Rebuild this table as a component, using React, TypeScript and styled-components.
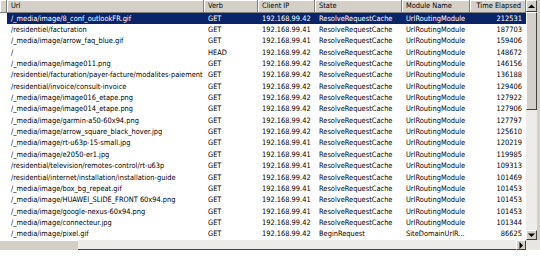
import React from "react";
import styled, { createGlobalStyle } from "styled-components";

const Global = createGlobalStyle`
  html, body { margin: 0; padding: 0; background: #ffffff; }
  body { width: 540px; height: 256px; overflow: hidden; }
`;

const COLS = "7px 197px 54px 57px 87px 68px 56px";
const ROW_H = 11.35;

const Frame = styled.div`
  width: 540px;
  height: 256px;
  display: flex;
  flex-direction: column;
  background: #ffffff;
  font-family: "DejaVu Sans Condensed", "Liberation Sans", sans-serif;
  font-size: 7.4px;
  color: #000;
`;

const Upper = styled.div`
  display: flex;
  height: 240px;
`;

const List = styled.div`
  width: 526px;
  display: flex;
  flex-direction: column;
  overflow: hidden;
`;

const HeaderRow = styled.div`
  display: grid;
  grid-template-columns: ${COLS};
  height: 12.7px;
  background: #d4d0c8;
  border-bottom: 1px solid #808080;
  box-sizing: border-box;
`;

const HeadCell = styled.div<{ $right?: boolean }>`
  box-sizing: border-box;
  border-right: 1px solid #808080;
  box-shadow: inset 1px 1px 0 #ffffff;
  padding: 0 ${(p) => (p.$right ? "4px" : "0")} 0 ${(p) => (p.$right ? "0" : "4px")};
  text-align: ${(p) => (p.$right ? "right" : "left")};
  line-height: 12px;
  white-space: nowrap;
  overflow: hidden;
`;

const Row = styled.div<{ $sel?: boolean }>`
  display: grid;
  grid-template-columns: ${COLS};
  height: ${ROW_H}px;
  line-height: ${ROW_H}px;
  color: ${(p) => (p.$sel ? "#ffffff" : "#000000")};
  background: ${(p) => (p.$sel ? "linear-gradient(to right, #ffffff 0 7px, #0a246a 7px)" : "#ffffff")};
`;

const Cell = styled.div<{ $right?: boolean }>`
  padding: 0 ${(p) => (p.$right ? "4px" : "0")} 0 ${(p) => (p.$right ? "0" : "4px")};
  text-align: ${(p) => (p.$right ? "right" : "left")};
  white-space: nowrap;
  overflow: hidden;
`;

const VScroll = styled.div`
  width: 14px;
  display: flex;
  flex-direction: column;
  background: #d4d0c8;
  padding-right: 3px;
  box-sizing: border-box;
`;

const Button = styled.div<{ $h: number }>`
  height: ${(p) => p.$h}px;
  box-sizing: border-box;
  background: #d4d0c8;
  border-top: 1px solid #ffffff;
  border-left: 1px solid #ffffff;
  border-right: 1px solid #404040;
  border-bottom: 1px solid #404040;
  display: flex;
  align-items: center;
  justify-content: center;
`;

const Thumb = styled.div<{ $h: number }>`
  height: ${(p) => p.$h}px;
  box-sizing: border-box;
  background: #d4d0c8;
  border-top: 1px solid #ffffff;
  border-left: 1px solid #ffffff;
  border-right: 1px solid #404040;
  border-bottom: 1px solid #404040;
`;

const Track = styled.div`
  flex: 1;
  background: #eeece8;
`;

const HScroll = styled.div`
  height: 10px;
  display: flex;
  background: #eeece8;
`;

const HThumb = styled.div`
  width: 78px;
  background: #d4d0c8;
  border-top: 1px solid #ffffff;
  box-sizing: border-box;
`;

const HTrack = styled.div`
  flex: 1;
  background: #eeece8;
  border-bottom: 1px solid #404040;
`;

const HButton = styled.div`
  width: 10px;
  box-sizing: border-box;
  background: #d4d0c8;
  border-top: 1px solid #ffffff;
  border-left: 1px solid #ffffff;
  border-right: 1px solid #404040;
  border-bottom: 1px solid #404040;
  display: flex;
  align-items: center;
  justify-content: center;
`;

const Corner = styled.div`
  width: 14px;
  background: #e8e6e0;
`;

const Arrow = ({ dir }: { dir: "up" | "down" | "right" }) => {
  const pts =
    dir === "up" ? "0,4 3.5,0.5 7,4" : dir === "down" ? "0,0.5 3.5,4 7,0.5" : "0.5,0 4,3.5 0.5,7";
  const w = dir === "right" ? 4 : 7;
  const h = dir === "right" ? 7 : 4;
  return (
    <svg width={w} height={h} viewBox={`0 0 ${w} ${h}`}>
      <polygon points={pts} fill="#000" />
    </svg>
  );
};

type R = [string, string, string, string, string, string];

const rows: R[] = [
  ["/_media/image/8_conf_outlookFR.gif", "GET", "192.168.99.42", "ResolveRequestCache", "UrlRoutingModule", "212531"],
  ["/residentiel/facturation", "GET", "192.168.99.41", "ResolveRequestCache", "UrlRoutingModule", "187703"],
  ["/_media/image/arrow_faq_blue.gif", "GET", "192.168.99.41", "ResolveRequestCache", "UrlRoutingModule", "159406"],
  ["/", "HEAD", "192.168.99.42", "ResolveRequestCache", "UrlRoutingModule", "148672"],
  ["/_media/image/image011.png", "GET", "192.168.99.42", "ResolveRequestCache", "UrlRoutingModule", "146156"],
  ["/residentiel/facturation/payer-facture/modalites-paiement", "GET", "192.168.99.42", "ResolveRequestCache", "UrlRoutingModule", "136188"],
  ["/residential/invoice/consult-invoice", "GET", "192.168.99.42", "ResolveRequestCache", "UrlRoutingModule", "129406"],
  ["/_media/image/image016_etape.png", "GET", "192.168.99.42", "ResolveRequestCache", "UrlRoutingModule", "127922"],
  ["/_media/image/image014_etape.png", "GET", "192.168.99.42", "ResolveRequestCache", "UrlRoutingModule", "127906"],
  ["/_media/image/garmin-a50-60x94.png", "GET", "192.168.99.42", "ResolveRequestCache", "UrlRoutingModule", "127797"],
  ["/_media/image/arrow_square_black_hover.jpg", "GET", "192.168.99.42", "ResolveRequestCache", "UrlRoutingModule", "125610"],
  ["/_media/image/rt-u63p-15-small.jpg", "GET", "192.168.99.41", "ResolveRequestCache", "UrlRoutingModule", "120219"],
  ["/_media/image/e2050-er1.jpg", "GET", "192.168.99.41", "ResolveRequestCache", "UrlRoutingModule", "119985"],
  ["/residential/television/remotes-control/rt-u63p", "GET", "192.168.99.41", "ResolveRequestCache", "UrlRoutingModule", "109313"],
  ["/residential/internet/installation/installation-guide", "GET", "192.168.99.42", "ResolveRequestCache", "UrlRoutingModule", "101469"],
  ["/_media/image/box_bg_repeat.gif", "GET", "192.168.99.41", "ResolveRequestCache", "UrlRoutingModule", "101453"],
  ["/_media/image/HUAWEI_SLIDE_FRONT 60x94.png", "GET", "192.168.99.41", "ResolveRequestCache", "UrlRoutingModule", "101453"],
  ["/_media/image/google-nexus-60x94.png", "GET", "192.168.99.41", "ResolveRequestCache", "UrlRoutingModule", "101453"],
  ["/_media/image/connecteur.jpg", "GET", "192.168.99.42", "ResolveRequestCache", "UrlRoutingModule", "101344"],
  ["/_media/image/pixel.gif", "GET", "192.168.99.42", "BeginRequest", "SiteDomainUrlR...", "86625"],
];

export default function App() {
  return (
    <Frame>
      <Global />
      <Upper>
        <List>
          <HeaderRow>
            <HeadCell />
            <HeadCell>Url</HeadCell>
            <HeadCell>Verb</HeadCell>
            <HeadCell>Client IP</HeadCell>
            <HeadCell>State</HeadCell>
            <HeadCell>Module Name</HeadCell>
            <HeadCell $right>Time Elapsed</HeadCell>
          </HeaderRow>
          {rows.map((r, i) => (
            <Row key={i} $sel={i === 0}>
              <Cell />
              <Cell>{r[0]}</Cell>
              <Cell>{r[1]}</Cell>
              <Cell>{r[2]}</Cell>
              <Cell>{r[3]}</Cell>
              <Cell>{r[4]}</Cell>
              <Cell $right>{r[5]}</Cell>
            </Row>
          ))}
        </List>
        <VScroll>
          <Button $h={12}>
            <Arrow dir="up" />
          </Button>
          <Thumb $h={98} />
          <Track />
          <Button $h={10}>
            <Arrow dir="down" />
          </Button>
        </VScroll>
      </Upper>
      <HScroll>
        <HThumb />
        <HTrack />
        <HButton>
          <Arrow dir="right" />
        </HButton>
        <Corner />
      </HScroll>
    </Frame>
  );
}
